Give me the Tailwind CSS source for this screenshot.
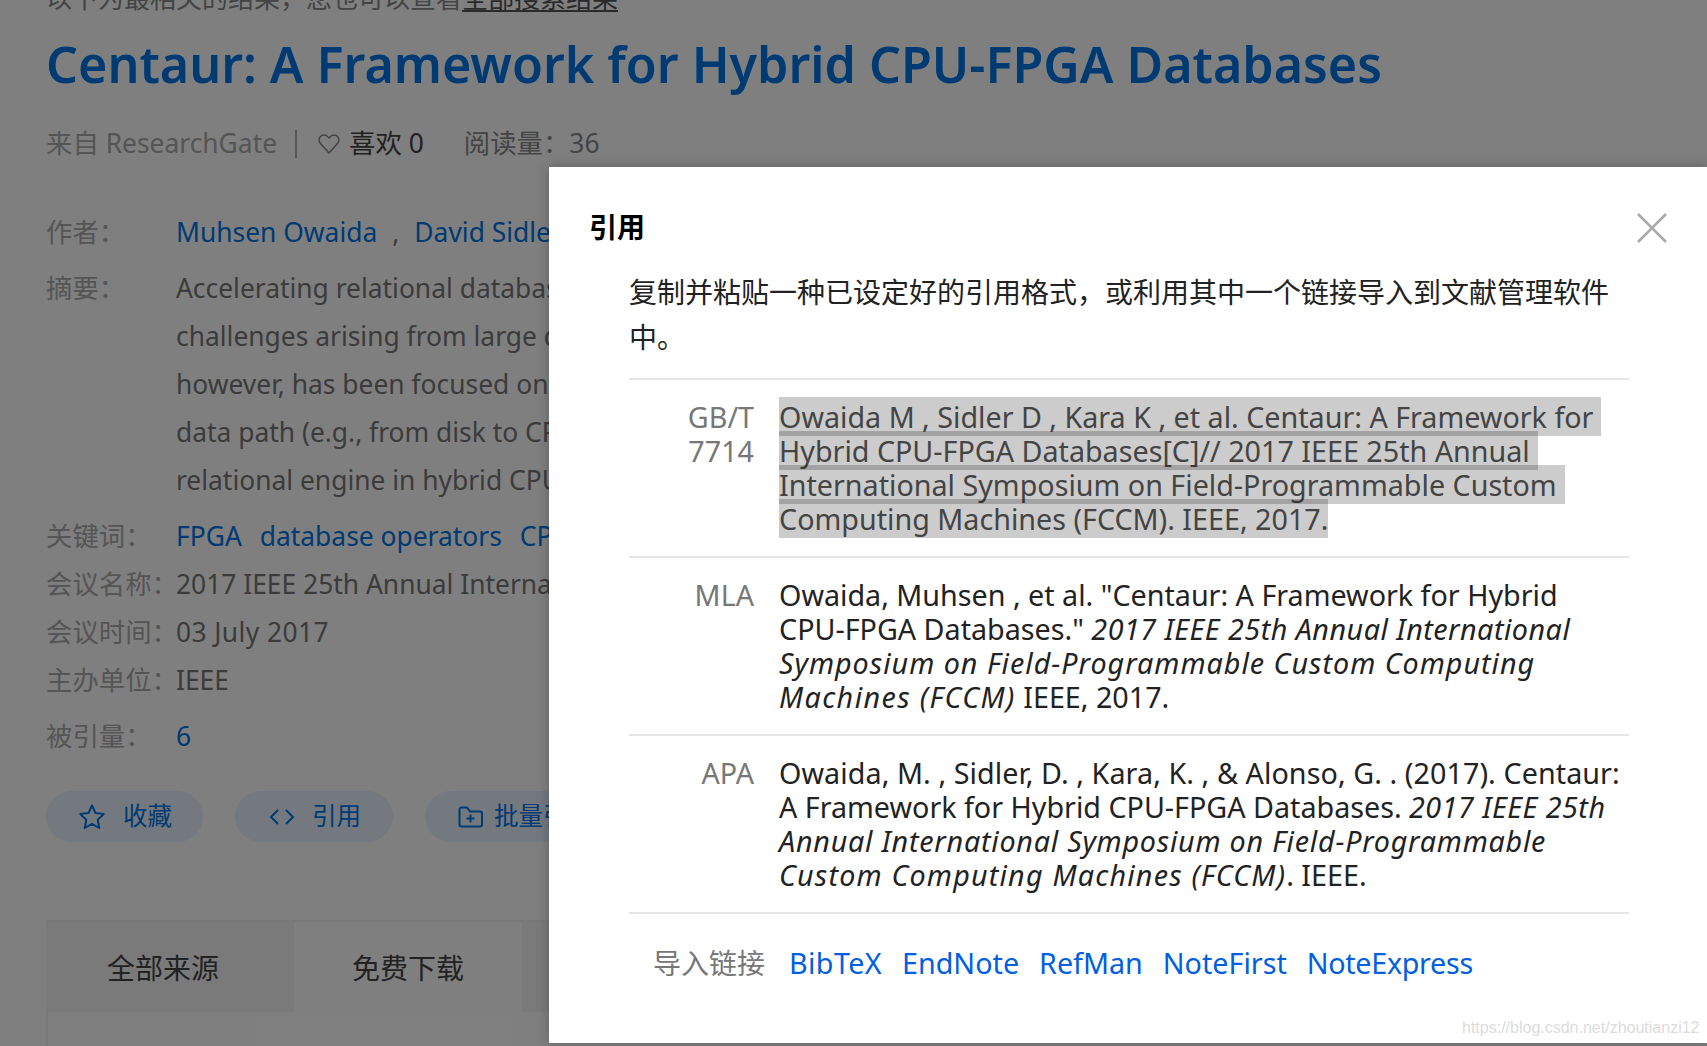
<!DOCTYPE html>
<html lang="zh-CN">
<head>
    <meta charset="UTF-8">
    <title>Centaur: A Framework for Hybrid CPU-FPGA Databases</title>
    <script src="https://cdn.jsdelivr.net/npm/@tailwindcss/browser@4"></script>
</head>
<body class="relative w-[1707px] h-[1046px] overflow-hidden bg-white font-['Noto_Sans','Noto_Sans_CJK_SC',sans-serif]">
    <!-- Page behind the dialog -->
    <div class="pl-[46px] text-[26.4px] text-[#777]">
        <div class="-mt-[22px] h-[40px] leading-[40px] text-[26px] text-[#888] whitespace-nowrap">以下为最相关的结果，您也可以查看<span class="text-[#555] underline">全部搜索结果</span></div>
        <h1 class="-mt-[1px] h-[94px] leading-[94px] text-[50.2px] font-semibold text-[#0075e6] whitespace-nowrap">Centaur: A Framework for Hybrid CPU-FPGA Databases</h1>
        <div class="mt-[14px] h-[38px] flex items-center whitespace-nowrap">
            <span class="text-[#aaa]">来自 ResearchGate</span>
            <span class="ml-[18px] mr-[20px] w-[2px] h-[28px] bg-[#aaa]"></span>
            <svg class="w-[24px] h-[24px] text-[#888]" viewBox="0 0 24 24" fill="none" stroke="currentColor" stroke-width="1.6" stroke-linejoin="round"><path d="M12 21 3.500 11.500a5.200 5.200 0 0 1 0-7 4.800 4.800 0 0 1 7 0L12 6l1.500-1.500a4.800 4.800 0 0 1 7 0 5.200 5.200 0 0 1 0 7z"/></svg>
            <span class="ml-[8px] text-[#444]">喜欢 0</span>
            <span class="ml-[40px] text-[#888]">阅读量：36</span>
        </div>

        <div class="mt-[45px] flex h-[48px] leading-[48px]">
            <span class="w-[130px] shrink-0 whitespace-nowrap text-[#aaa]">作者：</span>
            <span class="text-[#0075e6] whitespace-nowrap">Muhsen Owaida<span class="text-[#777] mx-[15px]">,</span>David Sidler</span>
        </div>
        <div class="mt-[8px] flex leading-[48px]">
            <span class="w-[130px] shrink-0 whitespace-nowrap text-[#aaa]">摘要：</span>
            <div class="whitespace-nowrap">
                <div>Accelerating relational databases</div>
                <div>challenges arising from large data</div>
                <div>however, has been focused on</div>
                <div>data path (e.g., from disk to CPU</div>
                <div>relational engine in hybrid CPU</div>
            </div>
        </div>
        <div class="mt-[8px] flex h-[48px] leading-[48px]">
            <span class="w-[130px] shrink-0 whitespace-nowrap text-[#aaa]">关键词：</span>
            <span class="flex gap-[18px] text-[#0075e6] whitespace-nowrap"><span>FPGA</span><span>database operators</span><span>CPU</span></span>
        </div>
        <div class="flex h-[48px] leading-[48px]">
            <span class="w-[130px] shrink-0 whitespace-nowrap text-[#aaa]">会议名称：</span>
            <span class="whitespace-nowrap">2017 IEEE 25th Annual International</span>
        </div>
        <div class="flex h-[48px] leading-[48px]">
            <span class="w-[130px] shrink-0 whitespace-nowrap text-[#aaa]">会议时间：</span>
            <span class="tracking-[0.4px]">03 July 2017</span>
        </div>
        <div class="flex h-[48px] leading-[48px]">
            <span class="w-[130px] shrink-0 whitespace-nowrap text-[#aaa]">主办单位：</span>
            <span>IEEE</span>
        </div>
        <div class="mt-[8px] flex h-[48px] leading-[48px]">
            <span class="w-[130px] shrink-0 whitespace-nowrap text-[#aaa]">被引量：</span>
            <span class="text-[#0075e6]">6</span>
        </div>

        <div class="mt-[31px] flex gap-[32px] text-[24.500px] text-[#0075e6] whitespace-nowrap">
            <div class="w-[157px] h-[51px] rounded-full bg-[#e6f2ff] flex items-center pl-[32px] gap-[17px]">
                <svg class="w-[28px] h-[28px]" viewBox="0 0 28 28" fill="none" stroke="currentColor" stroke-width="2" stroke-linejoin="round"><path d="m14 2.500 3.500 7.600 8.200 1-6 5.700 1.600 8.200-7.300-4.100-7.300 4.100 1.600-8.200-6-5.700 8.200-1z"/></svg>
                <span>收藏</span>
            </div>
            <div class="w-[158px] h-[51px] rounded-full bg-[#e6f2ff] flex items-center pl-[34px] gap-[17px]">
                <svg class="w-[26px] h-[20px]" viewBox="0 0 26 20" fill="none" stroke="currentColor" stroke-width="2"><path d="M9 3 2 10l7 7M17 3l7 7-7 7"/></svg>
                <span>引用</span>
            </div>
            <div class="w-[200px] h-[51px] rounded-full bg-[#e6f2ff] flex items-center pl-[33px] gap-[11px]">
                <svg class="w-[25px] h-[24px]" viewBox="0 0 25 24" fill="none" stroke="currentColor" stroke-width="2" stroke-linejoin="round"><path d="M1.500 19.500V4.500a2 2 0 0 1 2-2h5.500l3 4h10a2 2 0 0 1 2 2v11a2 2 0 0 1-2 2h-18.500a2 2 0 0 1-2-2zM12.500 9.500v8M8.500 13.500h8"/></svg>
                <span>批量引用</span>
            </div>
        </div>

        <div class="mt-[78px] w-[600px] flex h-[92px] text-[28px] text-[#444] border-t-2 border-[#f0f0f0]">
            <div class="w-[248px] bg-[#f4f4f4] flex items-center justify-center pr-[14px] pt-[2px]">全部来源</div>
            <div class="w-[228px] bg-white flex items-center justify-center pt-[2px]">免费下载</div>
            <div class="flex-1 bg-[#f4f4f4]"></div>
        </div>
        <div class="w-[2px] h-[40px] bg-[#f0f0f0]"></div>
    </div>

    <!-- Overlay -->
    <div class="absolute inset-0 bg-black/50"></div>

    <!-- Citation dialog -->
    <div class="absolute left-[549px] top-[167px] w-[1158px] h-[876px] bg-white shadow-[0_0_12px_rgba(0,0,0,0.25)] text-[28.700px] text-[#222]">
        <div class="absolute left-[40px] top-[40px] h-[40px] leading-[40px] text-[28px] font-bold text-black">引用</div>
        <svg class="absolute left-[1088px] top-[46px] w-[30px] h-[30px] text-[#aaa]" viewBox="0 0 30 30" fill="none" stroke="currentColor" stroke-width="2.500"><path d="m1 1 28 28M29 1 1 29"/></svg>

        <div class="ml-[80px] w-[1000px] pt-[103px]">
            <p class="leading-[45px] text-[28px] text-[#222]">复制并粘贴一种已设定好的引用格式，或利用其中一个链接导入到文献管理软件中。</p>

            <div class="mt-[18px] border-t-2 border-[#e5e5e5] py-[20px] flex leading-[34px]">
                <div class="w-[125px] shrink-0 text-right text-[#777]">GB/T 7714</div>
                <div class="ml-[25px] whitespace-nowrap">
                    <div><span class="bg-black/20 pr-[8px] text-[#444]">Owaida M , Sidler D , Kara K , et al. Centaur: A Framework for</span></div>
                    <div><span class="bg-black/20 pr-[8px] text-[#444]">Hybrid CPU-FPGA Databases[C]// 2017 IEEE 25th Annual</span></div>
                    <div><span class="bg-black/20 pr-[8px] text-[#444]">International Symposium on Field-Programmable Custom</span></div>
                    <div><span class="bg-black/20 text-[#444]">Computing Machines (FCCM). IEEE, 2017.</span></div>
                </div>
            </div>

            <div class="border-t-2 border-[#e5e5e5] py-[20px] flex leading-[34px]">
                <div class="w-[125px] shrink-0 text-right text-[#777]">MLA</div>
                <div class="ml-[25px] whitespace-nowrap">
                    <div>Owaida, Muhsen , et al. "Centaur: A Framework for Hybrid</div>
                    <div>CPU-FPGA Databases." <i class="tracking-[0.5px]">2017 IEEE 25th Annual International</i></div>
                    <div><i class="tracking-[1px]">Symposium on Field-Programmable Custom Computing</i></div>
                    <div><i class="tracking-[1.400px]">Machines (FCCM)</i> IEEE, 2017.</div>
                </div>
            </div>

            <div class="border-t-2 border-[#e5e5e5] py-[20px] flex leading-[34px]">
                <div class="w-[125px] shrink-0 text-right text-[#777]">APA</div>
                <div class="ml-[25px] whitespace-nowrap">
                    <div class="tracking-[0.08px]">Owaida, M. , Sidler, D. , Kara, K. , &amp; Alonso, G. . (2017). Centaur:</div>
                    <div>A Framework for Hybrid CPU-FPGA Databases. <i class="tracking-[0.5px]">2017 IEEE 25th</i></div>
                    <div><i class="tracking-[0.770px]">Annual International Symposium on Field-Programmable</i></div>
                    <div><i class="tracking-[1.200px]">Custom Computing Machines (FCCM)</i>. IEEE.</div>
                </div>
            </div>

            <div class="border-t-2 border-[#e5e5e5] pl-[24px] pt-[4px] flex items-center h-[96px] whitespace-nowrap">
                <span class="text-[28px] text-[#777] mr-[24px]">导入链接</span>
                <div class="flex gap-[20px] text-[#0060df]">
                    <span class="tracking-[0.4px]">BibTeX</span>
                    <span>EndNote</span>
                    <span>RefMan</span>
                    <span>NoteFirst</span>
                    <span class="tracking-[-0.3px]">NoteExpress</span>
                </div>
            </div>
        </div>
    </div>

    <div class="absolute left-[1462px] top-[1017px] text-[16px] leading-[22px] font-['Liberation_Sans',sans-serif] text-[#dcdcdc]">https://blog.csdn.net/zhoutianzi12</div>
</body>
</html>
